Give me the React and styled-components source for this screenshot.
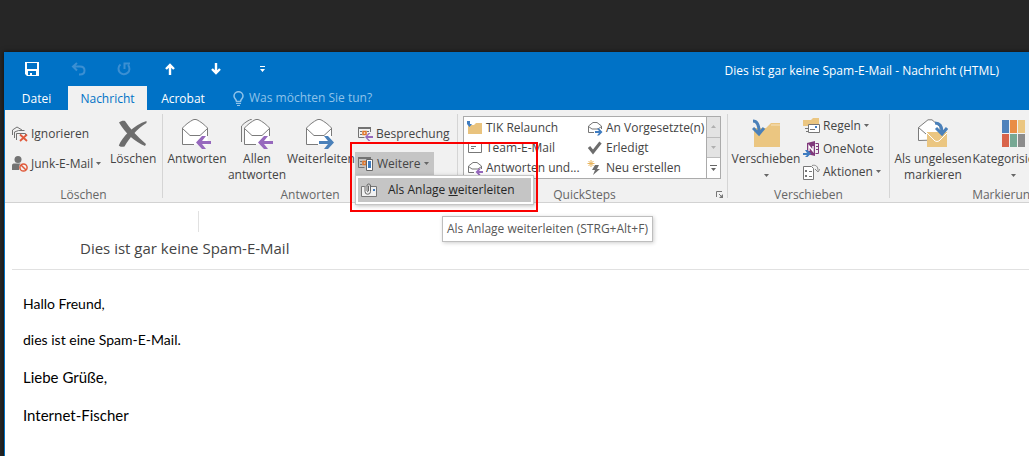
import React from 'react';
import styled, { createGlobalStyle } from 'styled-components';

const GlobalStyle = createGlobalStyle`
  * { box-sizing: border-box; }
  body {
    margin: 0;
    background: #262626;
    color: #444444;
    font-family: "Open Sans", "Noto Sans", sans-serif;
    font-size: 12px;
    line-height: 16px;
  }
  button, input { font: inherit; color: inherit; }
  svg { display: block; flex: none; }
`;

const Desktop = styled.div`
  display: flex;
  min-height: 100vh;
  padding: 52px 0 0 4px;
  overflow: hidden;
`;

const Window = styled.main`
  display: flex;
  flex-direction: column;
  flex: 1;
  min-width: 0;
  border-left: 1px solid #0072c6;
  background: #ffffff;
  box-shadow: 0 0 5px rgba(0, 0, 0, 0.6);
`;

const TitleBar = styled.header`
  display: flex;
  align-items: center;
  justify-content: space-between;
  height: 34px;
  padding: 0 30px 0 4px;
  background: #0072c6;
  color: #ffffff;
`;

const QuickAccess = styled.div`
  display: flex;
`;

const QuickButton = styled.button`
  display: flex;
  align-items: center;
  justify-content: center;
  width: 46px;
  height: 32px;
  padding: 0;
  border: 0;
  background: none;
  color: ${(p) => (p.$dim ? '#3b8fd2' : '#ffffff')};
`;

const WindowTitle = styled.span`
  padding-top: 4px;
  white-space: nowrap;
`;

const TabBar = styled.nav`
  display: flex;
  height: 24px;
  background: #0072c6;
  color: #ffffff;
`;

const Tab = styled.button`
  width: ${(p) => p.$width}px;
  padding: 2px 0 0;
  border: 0;
  background: ${(p) => (p.$active ? '#f1f1f1' : 'transparent')};
  color: ${(p) => (p.$active ? '#0072c6' : '#ffffff')};
`;

const TellMe = styled.label`
  display: flex;
  align-items: center;
  gap: 5px;
  margin-left: 14px;
  color: #8fc3ea;
  input {
    width: 160px;
    padding: 0;
    border: 0;
    outline: 0;
    background: none;
  }
  input::placeholder { color: #8fc3ea; opacity: 1; }
`;

const Ribbon = styled.div`
  display: flex;
  height: 93px;
  border-bottom: 1px solid #d2d2d2;
  background: #f1f1f1;
`;

const Group = styled.section`
  display: flex;
  flex: none;
  flex-direction: column;
  justify-content: space-between;
  width: ${(p) => p.$width}px;
  padding: 4px 0 0;
`;

const Divider = styled.div`
  flex: none;
  width: 1px;
  height: 84px;
  margin-top: 4px;
  background: #d5d5d5;
`;

const GroupBody = styled.div`
  display: flex;
  align-items: flex-start;
  height: 72px;
  padding-left: ${(p) => p.$inset || 0}px;
`;

const GroupFooter = styled.footer`
  display: flex;
  align-items: center;
  justify-content: center;
  position: relative;
  height: 16px;
  padding: ${(p) => (p.$launcher ? '2px 16px 0 0' : '2px 0 0')};
  color: #666666;
`;

const Launcher = styled.button`
  position: absolute;
  right: 3px;
  top: 5px;
  padding: 0;
  border: 0;
  background: none;
`;

const BigButton = styled.button`
  display: flex;
  flex: none;
  flex-direction: column;
  align-items: center;
  width: ${(p) => p.$width}px;
  padding: 2px 0 0;
  border: 0;
  background: none;
  white-space: nowrap;
`;

const BigIcon = styled.span`
  display: flex;
  align-items: center;
  justify-content: center;
  height: 35px;
`;

const BigLabel = styled.span`
  display: flex;
  flex-direction: column;
  align-items: center;
  height: 32px;
`;

const ArrowSlot = styled.span`
  display: flex;
  align-items: center;
  height: 16px;
`;

const SmallColumn = styled.div`
  display: flex;
  flex-direction: column;
  align-items: flex-start;
  gap: ${(p) => p.$gap}px;
  padding-top: ${(p) => p.$top || 0}px;
`;

const SmallButton = styled.button`
  display: flex;
  align-items: center;
  gap: 3px;
  height: 23px;
  padding: 0 5px 0 3px;
  border: 0;
  background: ${(p) => (p.$pressed ? '#c5c5c5' : 'transparent')};
  white-space: nowrap;
`;

const MenuAnchor = styled.div`
  position: relative;
`;

const Menu = styled.div`
  position: absolute;
  z-index: 2;
  left: 0;
  top: 23px;
  width: 179px;
  padding: 2px;
  border: 1px solid #c6c6c6;
  background: #ffffff;
  box-shadow: 1px 1px 4px rgba(0, 0, 0, 0.25);
`;

const MenuItem = styled.button`
  display: flex;
  align-items: center;
  gap: 10px;
  width: 100%;
  height: 24px;
  padding: 0 3px;
  border: 0;
  background: #c5c5c5;
  color: #262626;
  white-space: nowrap;
`;

const Highlight = styled.div`
  position: absolute;
  z-index: 3;
  left: -5px;
  top: -10px;
  width: 188px;
  height: 70px;
  border: 2px solid #fa0000;
  pointer-events: none;
`;

const Tooltip = styled.div`
  position: absolute;
  z-index: 2;
  left: 87px;
  top: 64px;
  padding: 4px;
  border: 1px solid #bebebe;
  background: #ffffff;
  box-shadow: 1px 1px 4px rgba(0, 0, 0, 0.2);
  color: #575757;
  white-space: nowrap;
`;

const Gallery = styled.div`
  display: flex;
  width: 258px;
  height: 63px;
  margin-top: 2px;
  border: 1px solid #ababab;
  background: #ffffff;
`;

const GalleryGrid = styled.div`
  display: grid;
  flex: 1;
  grid-template-columns: 120px 1fr;
  grid-auto-rows: 20px;
  padding: 1px 0 0 3px;
`;

const GalleryItem = styled.button`
  display: flex;
  align-items: center;
  gap: 3px;
  padding: 0;
  border: 0;
  background: none;
  white-space: nowrap;
`;

const GalleryScroll = styled.div`
  display: flex;
  flex-direction: column;
  width: 14px;
  border-left: 1px solid #ababab;
`;

const ScrollButton = styled.button`
  display: flex;
  flex: 1;
  align-items: center;
  justify-content: center;
  padding: 0;
  border: 0;
  border-bottom: ${(p) => (p.$last ? '0' : '1px solid #bcbcbc')};
  background: ${(p) => (p.$last ? '#ffffff' : '#e3e3e3')};
  color: ${(p) => (p.$last ? '#666666' : '#b0b0b0')};
`;

const MessageHeader = styled.div`
  margin-left: 7px;
  padding: 8px 0 11px 68px;
  border-bottom: 1px solid #e1e1e1;
`;

const HeaderRule = styled.div`
  width: 1px;
  height: 21px;
  margin-left: 118px;
  background: #e1e1e1;
`;

const Subject = styled.h1`
  margin: 6px 0 0;
  font-size: 15px;
  font-weight: 500;
  line-height: 20px;
`;

const MessageBody = styled.article`
  display: flex;
  flex-direction: column;
  gap: 16px;
  padding: 24px 18px;
  color: #000000;
  font-family: Lato, "Open Sans", sans-serif;
`;

const Line = styled.p`
  margin: 0;
  font-size: ${(p) => (p.$large ? 15 : 14)}px;
  line-height: ${(p) => (p.$large ? 22 : 20)}px;
`;

function Icon({ w, h = w, children }) {
  return (
    <svg width={w} height={h} viewBox={`0 0 ${w} ${h}`} fill="none" aria-hidden="true">
      {children}
    </svg>
  );
}

const Caret = () => (
  <Icon w={5} h={3}><path d="M0 0h5L2.5 3z" fill="#666" /></Icon>
);

const SaveIcon = () => (
  <Icon w={14}>
    <path fillRule="evenodd" fill="currentColor" d="M0 0h14v14H2l-2-2zM2 1v6h10V1zM3 9v4h2v-2h2v2h4V9z" />
  </Icon>
);
const UndoIcon = () => (
  <Icon w={15} h={14}>
    <path d="M6 1 2 4.500 6 8.500M2 4.500h7c3 0 4.500 1.500 4.500 4s-2 4-4.500 4H8" stroke="currentColor" strokeWidth="2" />
  </Icon>
);
const RedoIcon = () => (
  <Icon w={14} h={14}>
    <path d="M3.500 2.500A5.500 5.500 0 1 0 11 3M7.500 7V1.500H13" stroke="currentColor" strokeWidth="2" />
  </Icon>
);
const UpIcon = () => (
  <Icon w={10} h={12}><path d="M5 12V2M1 6l4-4 4 4" stroke="currentColor" strokeWidth="2.400" /></Icon>
);
const DownIcon = () => (
  <Icon w={10} h={12}><path d="M5 0v10M1 6l4 4 4-4" stroke="currentColor" strokeWidth="2.400" /></Icon>
);
const CustomizeIcon = () => (
  <Icon w={5} h={6}><path d="M0 0h5v1H0zM0 3h5L2.500 6z" fill="currentColor" /></Icon>
);
const BulbIcon = () => (
  <Icon w={11} h={15}>
    <path d="M3.500 10.500C3.500 8.500 1 7.500 1 5a4.500 4.300 0 0 1 9 0c0 2.500-2.500 3.500-2.500 5.500z" stroke="currentColor" strokeWidth="1.500" />
    <path d="M3 12h5v1H3zM4 14h3v1H4z" fill="currentColor" />
  </Icon>
);

const IgnoreIcon = () => (
  <Icon w={16}>
    <path d="M.5 9V4L5 1l5 3M2.500 12V6l4-1.500h6M4.500 14V7.500h9v2" stroke="#737373" />
    <path d="m8 8.500 7 6.500M15 8.500 8 15" stroke="#e0593a" strokeWidth="1.800" />
  </Icon>
);
const JunkIcon = () => (
  <Icon w={16}>
    <circle cx="6" cy="3.500" r="3.500" fill="#737373" />
    <path d="M0 14V9.500C0 8 1 7.500 2.500 7.500h6L7 14z" fill="#737373" />
    <circle cx="11.500" cy="11.500" r="4.500" fill="#f1f1f1" />
    <circle cx="11.500" cy="11.500" r="3.600" stroke="#e0593a" strokeWidth="1.500" />
    <path d="m9 9 5 5" stroke="#e0593a" strokeWidth="1.500" />
  </Icon>
);
const DeleteIcon = () => (
  <Icon w={30} h={28}>
    <path d="M1 2.500C3 1 5 .5 7 1c5 8 12 15 21 23l-1 2C17 22 7 13 1 2.500z" fill="#6d6d6d" />
    <path d="M28.500 1v2C19 9 12 17 6.500 26.500 4 27 2 27 .8 25.500 4 17 16 5 28.500 1z" fill="#6d6d6d" />
  </Icon>
);

const ArrowLeft = ({ x, y }) => (
  <path transform={`translate(${x} ${y})`} d="M16 5H7l4-5H7L1 6.500 7 13h4L7 8h9z" fill="#9668bd" />
);
const ArrowRight = ({ x, y }) => (
  <path transform={`translate(${x} ${y})`} d="M0 5h9L5 0h4l6 6.500L9 13H5l4-5H0z" fill="#4a80b9" />
);
const EnvelopeShape = ({ x = 0 }) => (
  <g transform={`translate(${x} 0)`}>
    <path d="M.5 25.500V9C4 5 8 2.500 11 .8Q13 0 15 .8C18 2.500 22 5 25.500 9v16.500z" fill="#fff" />
    <path d="M12 25.500H.5V9C4 5 8 2.500 11 .8Q13 0 15 .8C18 2.500 22 5 25.500 9v8M.5 9.500 8 16.500h10l7.500-7" stroke="#7b7b7b" />
  </g>
);
const ReplyIcon = () => (
  <Icon w={30}><EnvelopeShape /><ArrowLeft x={13} y={17} /></Icon>
);
const ReplyAllIcon = () => (
  <Icon w={32} h={30}>
    <path d="M.5 23V7C4 3 8 1 11 0" stroke="#7b7b7b" />
    <EnvelopeShape x={3} /><ArrowLeft x={16} y={17} />
  </Icon>
);
const ForwardIcon = () => (
  <Icon w={30}><EnvelopeShape /><ArrowRight x={13} y={17} /></Icon>
);

const CalendarShape = () => (
  <>
    <path d="M0 1h13v2H0z" fill="#737373" />
    <path d="M.5 2v9.500h6M12.500 2v4" stroke="#737373" />
    <path d="M2 5h2v1H2zM2 8h2v1H2zM9 5h2v1H9z" fill="#737373" />
    <path d="M5 5.500h3v3H5z" stroke="#e07428" strokeWidth="1.500" />
  </>
);
const MeetingIcon = () => (
  <Icon w={15} h={15}>
    <CalendarShape />
    <path d="M15 10H9.500l3-3h-2L7 11l3.500 4h2l-3-3H15z" fill="#9668bd" />
  </Icon>
);
const MoreIcon = () => (
  <Icon w={16}>
    <CalendarShape />
    <path d="M8.500 3.500h6v11h-6z" fill="#fff" stroke="#666" />
    <path d="M10 5h3v7h-3z" fill="#3f7cc0" />
  </Icon>
);
const AttachMailIcon = () => (
  <Icon w={17} h={16}>
    <path d="M3.500 4.500h-3v10h15v-10H10" fill="#f1f1f1" stroke="#777" />
    <path d="M12 7h2v2h-2z" fill="#3f7cc0" />
    <path d="M4 4v5.500a2.500 2.500 0 0 0 5.500 0V3a2 2 0 0 0-3.500 0v6q.7 1.500 1.500 0V4" stroke="#666" />
  </Icon>
);

const QuickFolderIcon = () => (
  <Icon w={16}>
    <path d="M1 5h6l2-2h6v11H1z" fill="#e9c37e" />
    <path d="M0 1h3v3h2L2.500 7 0 4z" fill="#3f7cc0" />
  </Icon>
);
const CardIcon = () => (
  <Icon w={16}>
    <path d="M1.500 3.500h13v9h-13z" stroke="#777" />
    <path d="M4 6h5v1H4zM4 8h3v1H4z" fill="#777" />
  </Icon>
);
const MiniMail = ({ forward }) => (
  <Icon w={16}>
    <path d="M7 12.500H1.500V6L6 2.500h4L14.500 6v3M1.500 6.500 5 9h6l3.500-2.500" stroke="#777" />
    {forward
      ? <path d="M8 11h4l-2-2.500h2L15.500 12 12 15.500h-2L12 13H8z" fill="#3f7cc0" />
      : <path d="M16 11h-4l2-2.500h-2L8.500 12l3.500 3.500h2L12 13h4z" fill="#9668bd" />}
  </Icon>
);
const CheckIcon = () => (
  <Icon w={16}><path d="m2 7 4 5 7.500-9.500" stroke="#6d6d6d" strokeWidth="3" /></Icon>
);
const NewStepIcon = () => (
  <Icon w={16}>
    <path d="M4 0v7M.5 3.500h7M1.500 1l5 5M6.500 1l-5 5" stroke="#e8b45d" />
    <path d="M8 5h4l-2 4h3l-7 6 2-5H5z" fill="#6d6d6d" />
  </Icon>
);

const MoveIcon = () => (
  <Icon w={29} h={29}>
    <path d="M2 9h12l5-5h9v24H2z" fill="#ebc681" />
    <path d="M19 6h9" stroke="#f6e3c0" />
    <path d="M1 2c4 0 6 4 6 11M1 9l6 6 5-6" stroke="#4a80b9" strokeWidth="3" />
  </Icon>
);
const RulesIcon = () => (
  <Icon w={17} h={16}>
    <path d="M0 2h8l2-2h6v8H0z" fill="#ebc681" />
    <path d="M5.500 6.500h11v8h-11z" fill="#fff" stroke="#777" />
    <path d="M12 8h2v2h-2z" fill="#3f7cc0" />
    <path d="M7 11h5v1H7zM2 10h3v1H2zM3 13h2v1H3z" fill="#777" />
  </Icon>
);
const OneNoteIcon = () => (
  <Icon w={17} h={16}>
    <path d="M4 2 12 0v15l-8-2z" fill="#80397b" />
    <path d="M12.500 2.500h3v10h-3M13 5.500h3M13 8.500h3" stroke="#80397b" />
    <path d="M6 10V5l4 5V5" stroke="#fff" strokeWidth="1.400" />
    <path d="M0 12h4l-2-3h2.500L8 12.500 4.500 16H2l2-2H0z" fill="#3f7cc0" />
  </Icon>
);
const ActionsIcon = () => (
  <Icon w={17} h={16}>
    <path d="M.5 2.500h8l2 2v11H.5z" fill="#fff" stroke="#777" />
    <path d="M2 6h2v2H2zM2 11h2v2H2zM6 7h3v1H6zM6 12h3v1H6z" fill="#777" />
    <path d="M9 1.500c4-1 6 1 6 5M12 5l3 3 2-3" stroke="#8a8a8a" />
  </Icon>
);

const UnreadIcon = () => (
  <Icon w={30}>
    <path d="M.5 21.500v-13L10 .8h4l8 7v13z" fill="#fff" stroke="#7b7b7b" />
    <path d="M.5 8.500 8 15" stroke="#7b7b7b" />
    <path d="M9 13h20v15H9z" fill="#ebc681" />
    <path d="m9 14 8 8q2 1 4 0l8-8" stroke="#fff" />
    <path d="M17 4c5 0 7 4 7 9M18 9l6 6 5-6" stroke="#4a80b9" strokeWidth="3" />
  </Icon>
);
const CategorizeIcon = () => (
  <Icon w={23} h={27}>
    <path d="M0 0h7v13H0z" fill="#4f82bb" />
    <path d="M8 0h7v13H8z" fill="#e98d45" />
    <path d="M16 0h7v13h-7z" fill="#ebc681" />
    <path d="M0 14h7v13H0z" fill="#d9644a" />
    <path d="M8 14h7v13H8z" fill="#77a894" />
    <path d="M16 14h7v13h-7z" fill="#8c8c8c" />
  </Icon>
);
const LauncherIcon = () => (
  <Icon w={8}>
    <path d="M.5 6V.5H6M3 3l3 3" stroke="#777" />
    <path d="M7 3v4H3z" fill="#777" />
  </Icon>
);

function Big({ icon, lines, width, menu }) {
  return (
    <BigButton $width={width}>
      <BigIcon>{icon}</BigIcon>
      <BigLabel>
        {lines.map((line) => <span key={line}>{line}</span>)}
        {menu && <ArrowSlot><Caret /></ArrowSlot>}
      </BigLabel>
    </BigButton>
  );
}

function Small({ icon, label, menu, pressed }) {
  return (
    <SmallButton $pressed={pressed}>
      {icon}<span>{label}</span>{menu && <Caret />}
    </SmallButton>
  );
}

const quickSteps = [
  { label: 'TIK Relaunch', icon: <QuickFolderIcon /> },
  { label: 'An Vorgesetzte(n)', icon: <MiniMail forward /> },
  { label: 'Team-E-Mail', icon: <CardIcon /> },
  { label: 'Erledigt', icon: <CheckIcon /> },
  { label: 'Antworten und...', icon: <MiniMail /> },
  { label: 'Neu erstellen', icon: <NewStepIcon /> },
];

export default function App() {
  return (
    <Desktop>
      <GlobalStyle />
      <Window>
        <TitleBar>
          <QuickAccess>
            <QuickButton aria-label="Speichern"><SaveIcon /></QuickButton>
            <QuickButton aria-label="Rückgängig" $dim><UndoIcon /></QuickButton>
            <QuickButton aria-label="Wiederholen" $dim><RedoIcon /></QuickButton>
            <QuickButton aria-label="Vorheriges Element"><UpIcon /></QuickButton>
            <QuickButton aria-label="Nächstes Element"><DownIcon /></QuickButton>
            <QuickButton aria-label="Anpassen"><CustomizeIcon /></QuickButton>
          </QuickAccess>
          <WindowTitle>Dies ist gar keine Spam-E-Mail - Nachricht (HTML)</WindowTitle>
        </TitleBar>
        <TabBar>
          <Tab $width={63}>Datei</Tab>
          <Tab $active $width={79}>Nachricht</Tab>
          <Tab $width={72}>Acrobat</Tab>
          <TellMe>
            <BulbIcon />
            <input type="text" placeholder="Was möchten Sie tun?" aria-label="Was möchten Sie tun?" />
          </TellMe>
        </TabBar>
        <Ribbon>
          <Group $width={157}>
            <GroupBody $inset={4}>
              <SmallColumn $top={8} $gap={7}>
                <Small icon={<IgnoreIcon />} label="Ignorieren" />
                <Small icon={<JunkIcon />} label="Junk-E-Mail" menu />
              </SmallColumn>
              <Big icon={<DeleteIcon />} lines={['Löschen']} width={54} />
            </GroupBody>
            <GroupFooter>Löschen</GroupFooter>
          </Group>
          <Divider />
          <Group $width={294}>
            <GroupBody $inset={4}>
              <Big icon={<ReplyIcon />} lines={['Antworten']} width={60} />
              <Big icon={<ReplyAllIcon />} lines={['Allen', 'antworten']} width={60} />
              <Big icon={<ForwardIcon />} lines={['Weiterleiten']} width={68} />
              <SmallColumn $top={8} $gap={7}>
                <Small icon={<MeetingIcon />} label="Besprechung" />
                <MenuAnchor>
                  <Small icon={<MoreIcon />} label="Weitere" menu pressed />
                  <Menu role="menu">
                    <MenuItem role="menuitem">
                      <AttachMailIcon />
                      <span>Als Anlage <u>w</u>eiterleiten</span>
                    </MenuItem>
                  </Menu>
                  <Highlight />
                  <Tooltip role="tooltip">Als Anlage weiterleiten (STRG+Alt+F)</Tooltip>
                </MenuAnchor>
              </SmallColumn>
            </GroupBody>
            <GroupFooter>Antworten</GroupFooter>
          </Group>
          <Divider />
          <Group $width={269}>
            <GroupBody $inset={5}>
              <Gallery>
                <GalleryGrid>
                  {quickSteps.map((step) => (
                    <GalleryItem key={step.label}>{step.icon}<span>{step.label}</span></GalleryItem>
                  ))}
                </GalleryGrid>
                <GalleryScroll>
                  <ScrollButton aria-label="Nach oben">
                    <Icon w={5} h={3}><path d="M0 3h5L2.500 0z" fill="currentColor" /></Icon>
                  </ScrollButton>
                  <ScrollButton aria-label="Nach unten">
                    <Icon w={5} h={3}><path d="M0 0h5L2.500 3z" fill="currentColor" /></Icon>
                  </ScrollButton>
                  <ScrollButton $last aria-label="Alle anzeigen">
                    <Icon w={7} h={7}><path d="M0 0h7v1H0zM1 3h5L3.500 6z" fill="currentColor" /></Icon>
                  </ScrollButton>
                </GalleryScroll>
              </Gallery>
            </GroupBody>
            <GroupFooter $launcher>
              QuickSteps
              <Launcher aria-label="QuickSteps verwalten"><LauncherIcon /></Launcher>
            </GroupFooter>
          </Group>
          <Divider />
          <Group $width={161}>
            <GroupBody $inset={4}>
              <Big icon={<MoveIcon />} lines={['Verschieben']} width={68} menu />
              <SmallColumn>
                <Small icon={<RulesIcon />} label="Regeln" menu />
                <Small icon={<OneNoteIcon />} label="OneNote" />
                <Small icon={<ActionsIcon />} label="Aktionen" menu />
              </SmallColumn>
            </GroupBody>
            <GroupFooter>Verschieben</GroupFooter>
          </Group>
          <Divider />
          <Group $width={243}>
            <GroupBody $inset={4}>
              <Big icon={<UnreadIcon />} lines={['Als ungelesen', 'markieren']} width={78} />
              <Big icon={<CategorizeIcon />} lines={['Kategorisieren']} width={82} menu />
            </GroupBody>
            <GroupFooter>Markierungen</GroupFooter>
          </Group>
        </Ribbon>
        <MessageHeader>
          <HeaderRule />
          <Subject>Dies ist gar keine Spam-E-Mail</Subject>
        </MessageHeader>
        <MessageBody>
          <Line>Hallo Freund,</Line>
          <Line>dies ist eine Spam-E-Mail.</Line>
          <Line $large>Liebe Grüße,</Line>
          <Line $large>Internet-Fischer</Line>
        </MessageBody>
      </Window>
    </Desktop>
  );
}
